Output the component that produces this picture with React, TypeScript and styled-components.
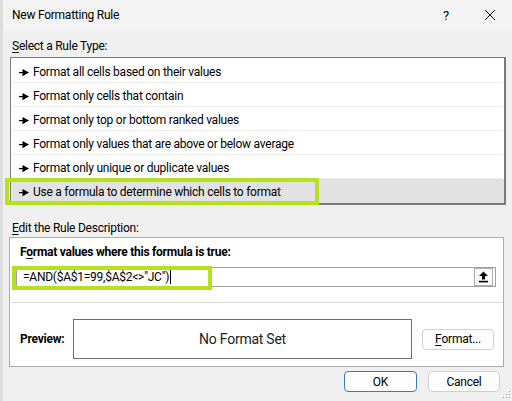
import React from "react";
import styled, { createGlobalStyle } from "styled-components";

const GlobalStyle = createGlobalStyle`
  * { box-sizing: border-box; }
  html, body { margin: 0; padding: 0; background: #f0f0f0; }
  body {
    font-family: Roboto, "Noto Sans", sans-serif;
    font-size: 12px;
    letter-spacing: -0.25px;
    color: #000;
  }
`;

const Window = styled.div`
  position: relative;
  width: 512px;
  height: 401px;
  background: #f0f0f0;
  border-left: 3px solid #dcdcdc;
  overflow: hidden;
`;

const TitleBar = styled.div`
  height: 30px;
  display: flex;
  align-items: center;
  padding-left: 9px;
  background: #f3f3f3;
  font-size: 12px;
`;

const Title = styled.div`
  flex: 1;
`;

const TitleIcon = styled.div`
  width: 44px;
  display: flex;
  justify-content: center;
  align-items: center;
  font-size: 13px;
`;

const Content = styled.div`
  padding: 0 6px 0 7px;
`;

const SectionLabel = styled.div<{ $top: number; $bottom: number }>`
  line-height: 16px;
  margin-top: ${(p) => p.$top}px;
  margin-bottom: ${(p) => p.$bottom}px;
  padding-left: 2px;
`;

const Key = styled.span`
  text-decoration: underline;
  text-underline-offset: 2px;
`;

const RuleList = styled.div`
  background: #fff;
  border: 1px solid #7a7a7a;
  border-right-width: 2px;
  border-bottom-width: 2px;
  padding-top: 1px;
`;

const RuleRow = styled.div<{ $selected?: boolean; $last?: boolean }>`
  position: relative;
  height: 24px;
  display: flex;
  align-items: center;
  padding: 2px 0 0 8px;
  gap: 3px;
  background: ${(p) => (p.$selected ? "#e2e2e2" : "#fff")};
  &::after {
    content: "";
    display: ${(p) => (p.$last ? "none" : "block")};
    position: absolute;
    left: 2px;
    right: 2px;
    bottom: 0;
    height: 1px;
    background: #ececec;
  }
`;

const Highlight = styled.div<{ $l: number; $t: number; $w: number; $h: number }>`
  position: absolute;
  left: ${(p) => p.$l}px;
  top: ${(p) => p.$t}px;
  width: ${(p) => p.$w}px;
  height: ${(p) => p.$h}px;
  border: 4px solid #b4e21c;
  pointer-events: none;
  z-index: 2;
`;

const Panel = styled.div`
  margin: 0 2px 0 -1px;
  height: 130px;
  background: #fff;
  border: 1px solid #adadad;
`;

const BoldLabel = styled.div`
  font-weight: 700;
  letter-spacing: -0.25px;
  line-height: 16px;
  padding-left: 10px;
  margin-top: 6px;
`;

const FormulaBox = styled.div`
  position: relative;
  margin: 7px 7px 0 6px;
  height: 20px;
  border: 1px solid #a0a0a0;
  display: flex;
  align-items: center;
  padding-left: 6px;
`;

const FormulaText = styled.span`
  font-size: 12px;
`;

const Caret = styled.span`
  display: inline-block;
  width: 1px;
  height: 14px;
  background: #000;
  margin-left: 1px;
`;

const CollapseButton = styled.div`
  position: absolute;
  right: 2px;
  top: 0px;
  width: 19px;
  height: 18px;
  border: 1px solid #adadad;
  background: #fafafa;
  display: flex;
  align-items: center;
  justify-content: center;
`;

const Separator = styled.div`
  margin: 15px 0 0 1px;
  height: 1px;
  background: #dadada;
`;

const PreviewRow = styled.div`
  margin-top: 16px;
  display: flex;
  align-items: center;
  padding-left: 10px;
`;

const PreviewLabel = styled.div`
  font-weight: 700;
  letter-spacing: -0.25px;
  width: 53px;
`;

const PreviewBox = styled.div`
  width: 339px;
  height: 40px;
  border: 1px solid #6e6e6e;
  display: flex;
  align-items: center;
  justify-content: center;
  font-size: 14px;
  color: #222;
`;

const Button = styled.div<{ $primary?: boolean; $w: number }>`
  width: ${(p) => p.$w}px;
  height: 21px;
  border: 1px solid ${(p) => (p.$primary ? "#3c7bbf" : "#d0d0d0")};
  border-radius: 4px;
  background: #fdfdfd;
  display: flex;
  align-items: center;
  justify-content: center;
  font-size: 12px;
`;

const FormatButton = styled(Button)`
  margin-left: 10px;
`;

const Footer = styled.div`
  display: flex;
  justify-content: flex-end;
  gap: 11px;
  margin-top: 4px;
  padding-right: 6px;
`;

const Grip = styled.svg`
  position: absolute;
  right: 1px;
  bottom: 2px;
`;

const Arrow = () => (
  <svg width="11" height="9" viewBox="0 0 11 9">
    <rect x="0" y="4" width="5" height="1.2" fill="#000" />
    <path d="M3.5 1 L10 4.6 L3.5 8.2 Z" fill="#000" />
  </svg>
);

const rules = [
  "Format all cells based on their values",
  "Format only cells that contain",
  "Format only top or bottom ranked values",
  "Format only values that are above or below average",
  "Format only unique or duplicate values",
  "Use a formula to determine which cells to format",
];

export default function App() {
  return (
    <>
      <GlobalStyle />
      <Window>
        <TitleBar>
          <Title>New Formatting Rule</Title>
          <TitleIcon>?</TitleIcon>
          <TitleIcon>
            <svg width="12" height="12" viewBox="0 0 12 12">
              <path d="M1 1 L11 11 M11 1 L1 11" stroke="#000" strokeWidth="1" />
            </svg>
          </TitleIcon>
        </TitleBar>
        <Content>
          <SectionLabel $top={8} $bottom={3}>
            <Key>S</Key>elect a Rule Type:
          </SectionLabel>
          <RuleList>
            {rules.map((r, i) => (
              <RuleRow key={r} $selected={i === 5} $last={i === 5}>
                <Arrow />
                <span>{r}</span>
                {i === 5 && <Highlight $l={-6} $t={-1} $w={314} $h={27} />}
              </RuleRow>
            ))}
          </RuleList>
          <SectionLabel $top={15} $bottom={1}>
            <Key>E</Key>dit the Rule Description:
          </SectionLabel>
          <Panel>
            <BoldLabel>
              F<Key>o</Key>rmat values where this formula is true:
            </BoldLabel>
            <FormulaBox>
              <FormulaText>=AND($A$1=99,$A$2&lt;&gt;"JC")</FormulaText>
              <Caret />
              <Highlight $l={-5} $t={-2} $w={200} $h={24} />
              <CollapseButton>
                <svg width="11" height="12" viewBox="0 0 11 12">
                  <path d="M5.5 0.5 L10 5 L7 5 L7 8.5 L4 8.5 L4 5 L1 5 Z" fill="#000" />
                  <rect x="1" y="9.8" width="9" height="1.6" fill="#000" />
                </svg>
              </CollapseButton>
            </FormulaBox>
            <Separator />
            <PreviewRow>
              <PreviewLabel>Preview:</PreviewLabel>
              <PreviewBox>No Format Set</PreviewBox>
              <FormatButton $w={72}>
                <Key>F</Key>ormat...
              </FormatButton>
            </PreviewRow>
          </Panel>
          <Footer>
            <Button $primary $w={73}>OK</Button>
            <Button $w={72}>Cancel</Button>
          </Footer>
        </Content>
        <Grip width="8" height="8" viewBox="0 0 8 8">
          <rect x="6" y="0" width="1" height="1" fill="#999" />
          <rect x="3" y="3" width="1" height="1" fill="#999" />
          <rect x="6" y="3" width="1" height="1" fill="#999" />
          <rect x="0" y="6" width="1" height="1" fill="#999" />
          <rect x="3" y="6" width="1" height="1" fill="#999" />
          <rect x="6" y="6" width="1" height="1" fill="#999" />
        </Grip>
      </Window>
    </>
  );
}
